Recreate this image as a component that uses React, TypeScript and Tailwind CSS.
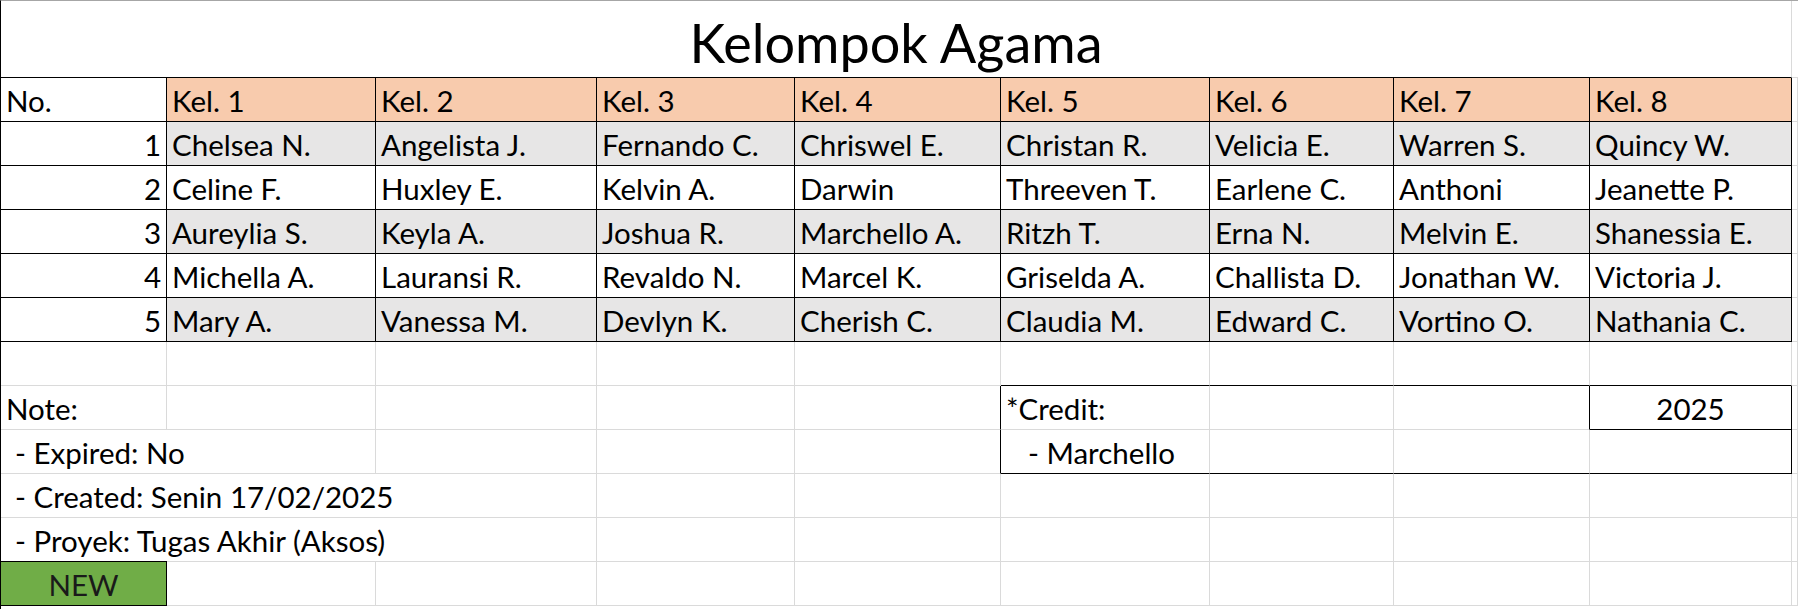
const kelompok = [
  ["Chelsea N.", "Angelista J.", "Fernando C.", "Chriswel E.", "Christan R.", "Velicia E.", "Warren S.", "Quincy W."],
  ["Celine F.", "Huxley E.", "Kelvin A.", "Darwin", "Threeven T.", "Earlene C.", "Anthoni", "Jeanette P."],
  ["Aureylia S.", "Keyla A.", "Joshua R.", "Marchello A.", "Ritzh T.", "Erna N.", "Melvin E.", "Shanessia E."],
  ["Michella A.", "Lauransi R.", "Revaldo N.", "Marcel K.", "Griselda A.", "Challista D.", "Jonathan W.", "Victoria J."],
  ["Mary A.", "Vanessa M.", "Devlyn K.", "Cherish C.", "Claudia M.", "Edward C.", "Vortino O.", "Nathania C."],
];

const base = "h-[44px] flex items-end pb-[3px] px-[5px] whitespace-nowrap border-solid";
const grid = "border-r border-b border-[#dadada]";

export default function App() {
  return (
    <div
      className="w-[1798px] h-[609px] overflow-hidden bg-white text-black border-l border-t border-l-black border-t-[#a6a6a6] grid grid-cols-[166px_209px_221px_198px_206px_209px_184px_196px_202px_1fr] content-start text-[29.5px] leading-[1.2]"
      style={{ fontFamily: "Lato, 'Open Sans', sans-serif" }}
    >
      {/* judul */}
      <div className="col-span-9 h-[77px] flex items-end justify-center pb-[1px] border-b border-r border-b-black border-r-[#dadada] text-[54px]">
        Kelompok Agama
      </div>
      <div className="h-[77px] border-b border-[#dadada]" />

      {/* header */}
      <div className={base + " border-r border-b border-black"}>No.</div>
      {["Kel. 1", "Kel. 2", "Kel. 3", "Kel. 4", "Kel. 5", "Kel. 6", "Kel. 7", "Kel. 8"].map((k) => (
        <div key={k} className={base + " border-r border-b border-black bg-[#f8cbad]"}>
          {k}
        </div>
      ))}
      <div className={"h-[44px] " + grid} />

      {/* isi */}
      {kelompok.map((row, i) => (
        <div key={i} className="contents">
          <div className={base + " justify-end border-r border-b border-black"}>{i + 1}</div>
          {row.map((name) => (
            <div key={name} className={base + " border-r border-b border-black " + (i % 2 === 0 ? "bg-[#e7e6e6]" : "bg-white")}>
              {name}
            </div>
          ))}
          <div className={"h-[44px] " + grid} />
        </div>
      ))}

      {/* baris kosong */}
      <div className={base + " " + grid} />
      <div className={base + " " + grid} />
      <div className={base + " " + grid} />
      <div className={base + " " + grid} />
      <div className={base + " " + grid} />
      <div className={base + " border-r border-b border-r-[#dadada] border-b-black"} />
      <div className={base + " border-r border-b border-r-[#dadada] border-b-black"} />
      <div className={base + " border-r border-b border-r-[#dadada] border-b-black"} />
      <div className={base + " border-r border-b border-r-[#dadada] border-b-black"} />
      <div className={"h-[44px] " + grid} />

      {/* note + credit */}
      <div className={base + " " + grid}>Note:</div>
      <div className={base + " " + grid} />
      <div className={base + " " + grid} />
      <div className={base + " " + grid} />
      <div className={base + " border-r border-b border-r-black border-b-[#dadada]"} />
      <div className={base + " " + grid}>*Credit:</div>
      <div className={base + " " + grid} />
      <div className={base + " border-r border-b border-r-black border-b-[#dadada]"} />
      <div className={base + " justify-center border-r border-b border-black"}>2025</div>
      <div className={"h-[44px] " + grid} />

      <div className={base + " pl-[14px] border-b border-[#dadada] relative z-10"}>- Expired: No</div>
      <div className={base + " " + grid} />
      <div className={base + " " + grid} />
      <div className={base + " " + grid} />
      <div className={base + " border-r border-b border-r-black border-b-[#dadada]"} />
      <div className={base + " pl-[27px] border-r border-b border-r-[#dadada] border-b-black"}>- Marchello</div>
      <div className={base + " border-r border-b border-r-[#dadada] border-b-black"} />
      <div className={base + " border-r border-b border-r-[#dadada] border-b-black"} />
      <div className={base + " border-r border-b border-black"} />
      <div className={"h-[44px] " + grid} />

      <div className={base + " pl-[14px] border-b border-[#dadada] relative z-10"}>- Created: Senin 17/02/2025</div>
      <div className={base + " border-b border-[#dadada]"} />
      <div className={base + " " + grid} />
      <div className={base + " " + grid} />
      <div className={base + " " + grid} />
      <div className={base + " " + grid} />
      <div className={base + " " + grid} />
      <div className={base + " " + grid} />
      <div className={base + " " + grid} />
      <div className={"h-[44px] " + grid} />

      <div className={base + " pl-[14px] border-b border-black relative z-10"}>- Proyek: Tugas Akhir (Aksos)</div>
      <div className={base + " border-b border-[#dadada]"} />
      <div className={base + " " + grid} />
      <div className={base + " " + grid} />
      <div className={base + " " + grid} />
      <div className={base + " " + grid} />
      <div className={base + " " + grid} />
      <div className={base + " " + grid} />
      <div className={base + " " + grid} />
      <div className={"h-[44px] " + grid} />

      <div className={base + " justify-center border-r border-b border-black bg-[#70ad47] text-[#1a1a1a]"}>NEW</div>
      <div className={base + " " + grid} />
      <div className={base + " " + grid} />
      <div className={base + " " + grid} />
      <div className={base + " " + grid} />
      <div className={base + " " + grid} />
      <div className={base + " " + grid} />
      <div className={base + " " + grid} />
      <div className={base + " " + grid} />
      <div className={"h-[44px] " + grid} />
    </div>
  );
}
